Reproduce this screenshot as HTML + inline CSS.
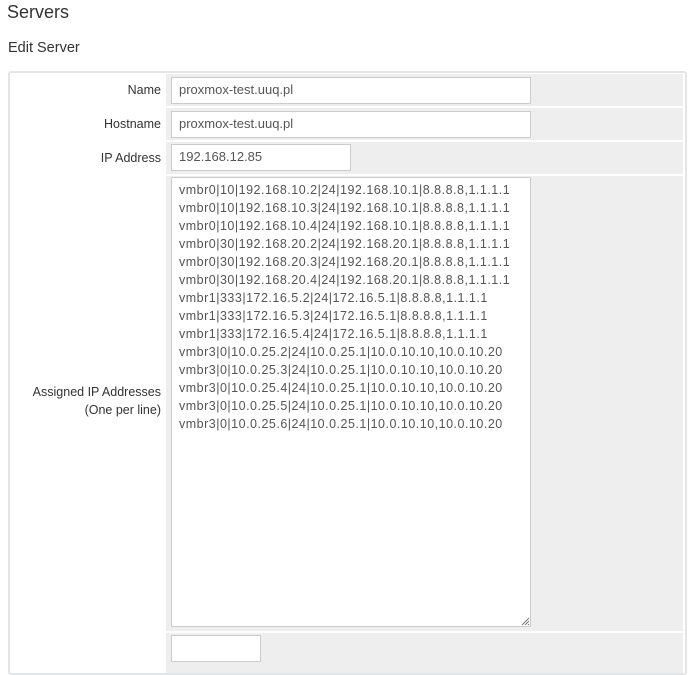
<!DOCTYPE html>
<html><head><style>
body{margin:0;background:#fff;font-family:"Liberation Sans",sans-serif;width:696px;height:640px;overflow:hidden;position:relative;color:#333}
.h1{position:absolute;left:7px;top:2px;font-size:18px;color:#333}
.h2{position:absolute;left:8px;top:40px;font-size:14.5px;color:#333}
.panel{position:absolute;left:8px;top:71px;width:675px;height:600px;border:2px solid #e3e6e9;border-radius:3px;background:#fff}
.cell{position:absolute;left:156px;width:517px;background:#eee}
.lab{position:absolute;right:524px;font-size:12.5px;color:#333;text-align:right;line-height:18px}
.inp{position:absolute;background:#fff;border:1px solid #ccc;font-size:13px;color:#555;box-sizing:border-box;padding-left:7px;line-height:24px}
.ta{position:absolute;left:161px;top:104px;width:360px;height:450px;background:#fff;border:1px solid #ccc;box-sizing:border-box;padding:3px 7px;font-size:12.5px;color:#555;line-height:18px;white-space:pre;letter-spacing:0.5px}
</style></head><body>
<div class="h1">Servers</div>
<div class="h2">Edit Server</div>
<div class="panel">
<div class="cell" style="top:1px;height:32px"></div>
<div class="cell" style="top:35px;height:32px"></div>
<div class="cell" style="top:69px;height:32px"></div>
<div class="cell" style="top:103px;height:455px"></div>
<div class="cell" style="top:560px;height:40px"></div>
<div class="lab" style="top:8px">Name</div>
<div class="lab" style="top:42px">Hostname</div>
<div class="lab" style="top:76px">IP Address</div>
<div class="lab" style="top:310px">Assigned IP Addresses<br>(One per line)</div>
<div class="inp" style="left:161px;top:4px;width:360px;height:27px">proxmox-test.uuq.pl</div>
<div class="inp" style="left:161px;top:38px;width:360px;height:27px">proxmox-test.uuq.pl</div>
<div class="inp" style="left:161px;top:71px;width:180px;height:27px">192.168.12.85</div>
<div class="ta">vmbr0|10|192.168.10.2|24|192.168.10.1|8.8.8.8,1.1.1.1
vmbr0|10|192.168.10.3|24|192.168.10.1|8.8.8.8,1.1.1.1
vmbr0|10|192.168.10.4|24|192.168.10.1|8.8.8.8,1.1.1.1
vmbr0|30|192.168.20.2|24|192.168.20.1|8.8.8.8,1.1.1.1
vmbr0|30|192.168.20.3|24|192.168.20.1|8.8.8.8,1.1.1.1
vmbr0|30|192.168.20.4|24|192.168.20.1|8.8.8.8,1.1.1.1
vmbr1|333|172.16.5.2|24|172.16.5.1|8.8.8.8,1.1.1.1
vmbr1|333|172.16.5.3|24|172.16.5.1|8.8.8.8,1.1.1.1
vmbr1|333|172.16.5.4|24|172.16.5.1|8.8.8.8,1.1.1.1
vmbr3|0|10.0.25.2|24|10.0.25.1|10.0.10.10,10.0.10.20
vmbr3|0|10.0.25.3|24|10.0.25.1|10.0.10.10,10.0.10.20
vmbr3|0|10.0.25.4|24|10.0.25.1|10.0.10.10,10.0.10.20
vmbr3|0|10.0.25.5|24|10.0.25.1|10.0.10.10,10.0.10.20
vmbr3|0|10.0.25.6|24|10.0.25.1|10.0.10.10,10.0.10.20</div>
<svg style="position:absolute;left:511px;top:544px" width="9" height="9"><path d="M1 8L8 1M4 8L8 4M7 8L8 7" stroke="#777" stroke-width="1"/></svg>
<div class="inp" style="left:161px;top:562px;width:90px;height:27px"></div>
</div>
</body></html>
